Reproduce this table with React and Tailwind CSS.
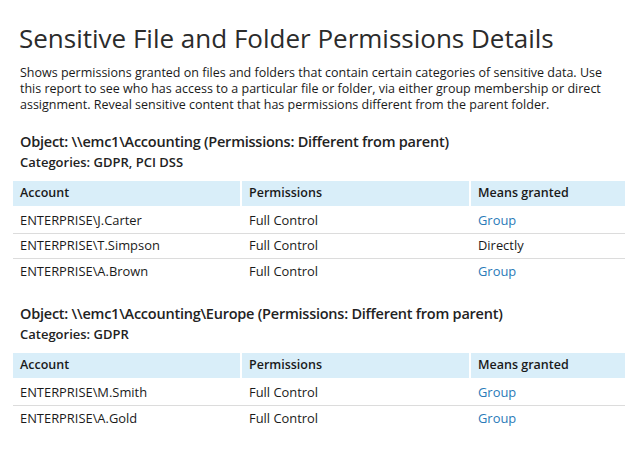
const sections = [
  {
    object: '\\\\emc1\\Accounting (Permissions: Different from parent)',
    categories: 'GDPR, PCI DSS',
    rows: [
      { account: 'ENTERPRISE\\J.Carter', perm: 'Full Control', means: 'Group' },
      { account: 'ENTERPRISE\\T.Simpson', perm: 'Full Control', means: 'Directly' },
      { account: 'ENTERPRISE\\A.Brown', perm: 'Full Control', means: 'Group' },
    ],
  },
  {
    object: '\\\\emc1\\Accounting\\Europe (Permissions: Different from parent)',
    categories: 'GDPR',
    rows: [
      { account: 'ENTERPRISE\\M.Smith', perm: 'Full Control', means: 'Group' },
      { account: 'ENTERPRISE\\A.Gold', perm: 'Full Control', means: 'Group' },
    ],
  },
];

const Section = ({ object, categories, rows, first }) => (
  <div className={first ? 'mt-[19px]' : 'mt-[20px]'}>
    <div className="px-[20px] text-[14.5px] tracking-[-0.24px] leading-[20px] font-semibold text-[#222]">Object: {object}</div>
    <div className="px-[20px] text-[13px] leading-[20px] font-semibold text-[#222]">Categories: {categories}</div>
    <div className="mx-[13px] mt-[9px] w-[612px] text-[12.5px] text-[#1a1a1a]">
      <div className="grid grid-cols-[227px_227px_154px] gap-x-[2px]">
        <div className="bg-[#d9eef9] h-[25px] px-[7px] flex items-center font-semibold">Account</div>
        <div className="bg-[#d9eef9] h-[25px] px-[7px] flex items-center font-semibold">Permissions</div>
        <div className="bg-[#d9eef9] h-[25px] px-[7px] flex items-center font-semibold">Means granted</div>
      </div>
      <div className="pt-[3px] text-[12.9px]">
        {rows.map((r, i) => (
          <div
            key={i}
            className={`grid grid-cols-[227px_227px_154px] gap-x-[2px] h-[25px] items-center ${
              i < rows.length - 1 ? 'border-b border-[#dcdcdc]' : ''
            }`}
          >
            <div className="px-[7px]">{r.account}</div>
            <div className="px-[7px]">{r.perm}</div>
            <div className={`px-[7px] ${r.means === 'Group' ? 'text-[#2a7ab8]' : ''}`}>{r.means}</div>
          </div>
        ))}
      </div>
    </div>
  </div>
);

export default function App() {
  return (
    <div className="w-[640px] h-[450px] bg-white overflow-hidden pt-[20px]" style={{ fontFamily: '"Open Sans", sans-serif' }}>
      <h1 className="px-[19px] text-[26px] leading-[36px] text-[#2b2b2b]">Sensitive File and Folder Permissions Details</h1>
      <p className="px-[20px] mt-[9px] text-[12.5px] leading-[16px] text-[#1a1a1a]">
        Shows permissions granted on files and folders that contain certain categories of sensitive data. Use this report to
        see who has access to a particular file or folder, via either group membership or direct assignment. Reveal
        sensitive content that has permissions different from the parent folder.
      </p>
      {sections.map((s, i) => (
        <Section key={i} first={i === 0} {...s} />
      ))}
    </div>
  );
}
